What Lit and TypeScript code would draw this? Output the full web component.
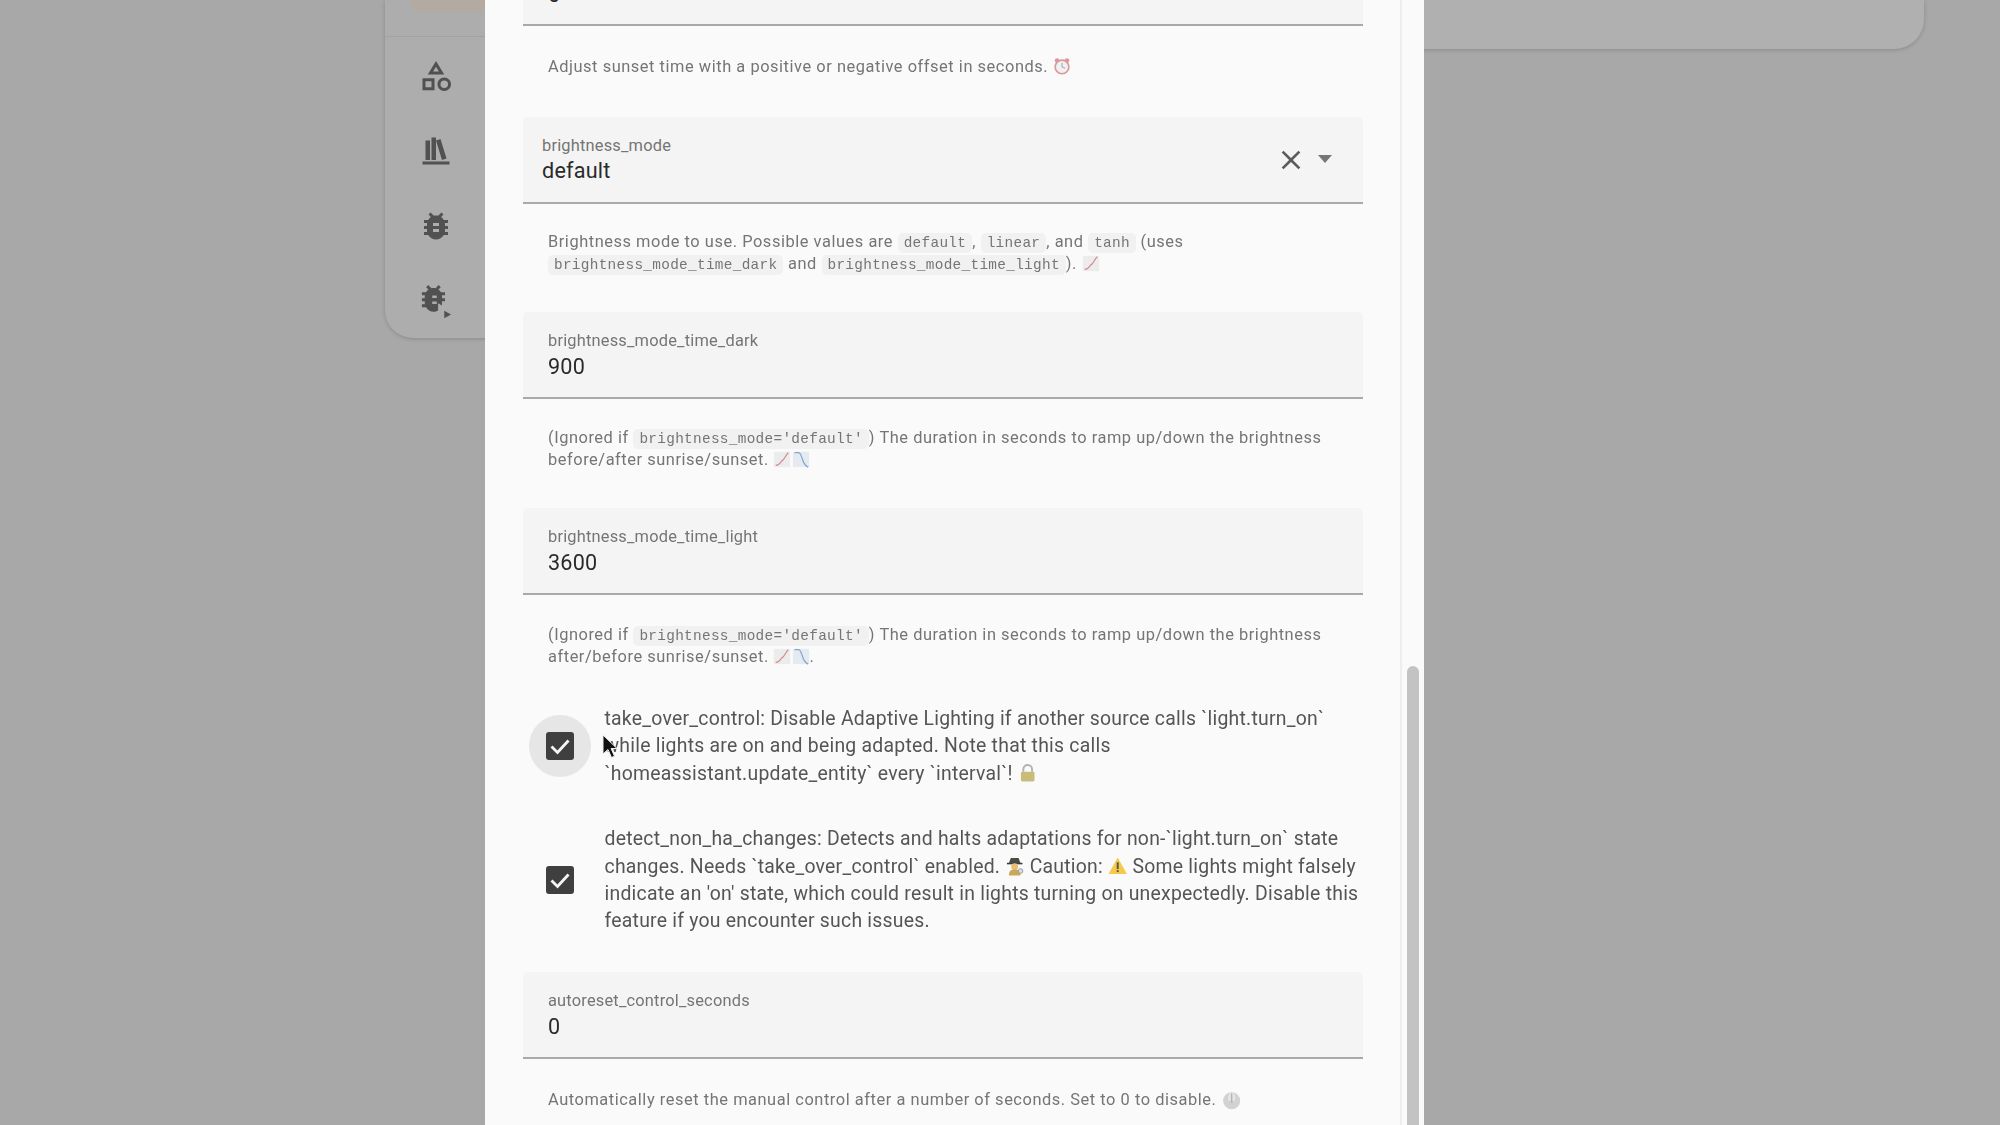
import { LitElement, html, css, svg } from "lit";
import { customElement } from "lit/decorators.js";

const P = {
  shape:
    "M11,13.5V21.5H3V13.5H11M9,15.5H5V19.5H9V15.5M12,2L17.5,11H6.5L12,2M12,5.86L10.08,9H13.92L12,5.86M17.5,13C20,13 22,15 22,17.5C22,20 20,22 17.5,22C15,22 13,20 13,17.5C13,15 15,13 17.5,13M17.5,15A2.5,2.5 0 0,0 15,17.5A2.5,2.5 0 0,0 17.5,20A2.5,2.5 0 0,0 20,17.5A2.5,2.5 0 0,0 17.5,15Z",
  shelf: "M9 3V18H12V3H9M12 5L16 18L19 17L15 4L12 5M5 5V18H8V5H5M3 19V21H21V19H3Z",
  bug: "M14,12H10V10H14M14,16H10V14H14M20,8H17.19C16.74,7.22 16.12,6.55 15.37,6.04L17,4.41L15.59,3L13.42,5.17C12.96,5.06 12.5,5 12,5C11.5,5 11.04,5.06 10.59,5.17L8.41,3L7,4.41L8.62,6.04C7.88,6.55 7.26,7.22 6.81,8H4V10H6.09C6.04,10.33 6,10.66 6,11V12H4V14H6V15C6,15.34 6.04,15.67 6.09,16H4V18H6.81C7.85,19.79 9.78,21 12,21C14.22,21 16.15,19.79 17.19,18H20V16H17.91C17.96,15.67 18,15.34 18,15V14H20V12H18V11C18,10.66 17.96,10.33 17.91,10H20V8Z",
  bugPlay:
    "M12.5,10H9.5V8.4H12.5M12.5,14H9.5V12.4H12.5M18,6.2H15.3C14.9,5.5 14.3,4.9 13.6,4.4L15.2,2.8L13.8,1.4L11.7,3.5C11.2,3.4 10.8,3.3 10.3,3.3C9.8,3.3 9.4,3.4 8.9,3.5L6.8,1.4L5.4,2.8L7,4.4C6.3,4.9 5.7,5.5 5.3,6.2H2.6V8.2H4.6C4.5,8.5 4.5,8.9 4.5,9.2V10.2H2.6V12.2H4.5V13.2C4.5,13.6 4.5,13.9 4.6,14.2H2.6V16.2H5.3C6.3,18 8.2,19.2 10.3,19.2C11.4,19.2 12.5,18.9 13.4,18.3V13.5L16,15V14.2H16V12.2H18V10.2H16V9.2C16,8.9 16,8.5 15.9,8.2H18V6.2ZM17.5,18.5V23.5L22,21Z",
  close: "M19,6.41L17.59,5L12,10.59L6.41,5L5,6.41L10.59,12L5,17.59L6.41,19L12,13.41L17.59,19L19,17.59L13.41,12L19,6.41Z",
};

const icon = (d: string) => html`<svg class="nav-icon" viewBox="0 0 24 24"><path d=${d}></path></svg>`;

const emoji = {
  clock: svg`<circle cx="4.5" cy="4" r="2.6" fill="#dc9a9a"/><circle cx="15.5" cy="4" r="2.6" fill="#dc9a9a"/><circle cx="10" cy="11" r="7.6" fill="#eef0f2" stroke="#dc9696" stroke-width="1.8"/><path d="M10 11V6.5M10 11l3.5 1.5" stroke="#999" stroke-width="1" fill="none"/>`,
  up: svg`<rect x="1" y="2" width="18" height="17" fill="#ececec"/><path d="M3 17c3 0 4-1 6-4 1-2 2-1 3-3 2-3 3-5 5-7" stroke="#cf8a8f" stroke-width="1.3" fill="none"/>`,
  down: svg`<rect x="1" y="2" width="18" height="17" fill="#e5eaf1"/><path d="M3 3h4c2 0 2 1 3 3s2 6 3 8 3 4 5 5" stroke="#7fa5cf" stroke-width="1.3" fill="none"/>`,
  lock: svg`<path d="M5.5 9V6.5a4.5 4.5 0 0 1 9 0V9" fill="none" stroke="#b2b2b2" stroke-width="2"/><rect x="3" y="9" width="14" height="10" rx="1.4" fill="#c9bb78"/>`,
  spy: svg`<path d="M4 7.5 6 2h8l2 5.5z" fill="#4a4a4a"/><rect x="2" y="7" width="16" height="1.6" fill="#3c3c3c"/><circle cx="10" cy="11" r="3.6" fill="#e6bf73"/><path d="M4 20c0-5 3-6 6-6s6 1 6 6z" fill="#c9a85c"/><circle cx="16" cy="15.5" r="2.4" fill="#ddd" stroke="#999"/>`,
  warn: svg`<path d="M10 1.5 19.5 18.5H.5z" fill="#f7c94a"/><rect x="9" y="6.5" width="2" height="7" fill="#555"/><rect x="9" y="14.6" width="2" height="2" fill="#555"/>`,
  stop: svg`<circle cx="10" cy="11" r="8" fill="#d2d2d2"/><path d="M10 2c3 2 4 5 3 9h-6c-1-4 0-7 3-9z" fill="#e6e6e6"/><rect x="9.3" y="4" width="1.4" height="9" fill="#b4b4b4"/>`,
};

const em = (g: unknown, cls = "") => html`<svg class="emoji ${cls}" viewBox="0 0 20 20">${g}</svg>`;

@customElement("app-root")
export class AppRoot extends LitElement {
  static styles = css`
    :host {
      display: block;
      position: relative;
      width: 2000px;
      height: 1125px;
      overflow: hidden;
      background: #a8a8a8;
      font-family: Roboto, "Liberation Sans", sans-serif;
    }
    /* page behind the dialog */
    .page {
      display: flex;
      align-items: flex-start;
      padding-left: 385px;
      width: 1539px;
      filter: blur(0.4px);
    }
    .sidebar {
      width: 130px;
      height: 338px;
      flex: none;
      background: #adadad;
      border-bottom-left-radius: 28px;
      box-shadow: 0 1px 4px rgba(0, 0, 0, 0.18);
    }
    .nav-top {
      height: 37px;
      box-sizing: border-box;
      padding: 0 0 25px 26px;
      border-bottom: 1px solid #a2a2a2;
    }
    .nav-active {
      height: 12px;
      background: #b3aba1;
      border-bottom-left-radius: 6px;
    }
    .nav-item {
      height: 75px;
      width: 102px;
      display: flex;
      align-items: center;
      justify-content: center;
    }
    .nav-list {
      padding-top: 1px;
    }
    .nav-icon {
      width: 36px;
      height: 36px;
      fill: #515151;
    }
    .panel {
      flex: 1;
      height: 49px;
      background: #b0b0b0;
      border-bottom-right-radius: 30px;
      box-shadow: 0 1px 4px rgba(0, 0, 0, 0.18);
    }
    /* dialog */
    .dialog {
      position: absolute;
      left: 485px;
      top: 0;
      width: 939px;
      height: 1125px;
      background: #fafafa;
      overflow: hidden;
      box-sizing: border-box;
      padding-left: 38px;
    }
    .track {
      position: absolute;
      left: 915px;
      top: 0;
      bottom: 0;
      width: 2px;
      background: #eeeeee;
    }
    .thumb {
      position: absolute;
      left: 922px;
      top: 666px;
      bottom: 0;
      width: 12px;
      background: #c3c3c3;
      border-radius: 6px 6px 0 0;
    }
    .content {
      width: 840px;
      display: flex;
      flex-direction: column;
      filter: blur(0.4px);
    }
    .field {
      height: 87px;
      box-sizing: border-box;
      padding: 20px 25px 0;
      background: #f4f4f4;
      border-radius: 5px 5px 0 0;
      border-bottom: 2px solid #a9a9a9;
      display: flex;
      align-items: flex-start;
    }
    .field.clipped {
      height: 26px;
      padding: 0 25px;
      border-radius: 0;
      overflow: hidden;
    }
    .field.select {
      padding-left: 19px;
    }
    .field-body {
      flex: 1;
      min-width: 0;
    }
    .label {
      font-size: 16.4px;
      line-height: 18px;
      color: #757575;
      letter-spacing: 0.2px;
    }
    .value {
      font-size: 21.6px;
      line-height: 30px;
      margin-top: 2px;
      color: #2a2a2a;
      letter-spacing: 0.2px;
    }
    .field.select .value {
      margin-top: 1px;
    }
    .field.clipped .clip-value {
      margin-top: -20px;
    }
    .actions {
      display: flex;
      align-items: center;
      height: 44px;
      gap: 8px;
      margin-right: 6px;
    }
    .close {
      width: 32px;
      height: 32px;
      fill: #5c5c5c;
      margin-top: 2px;
    }
    .arrow {
      width: 0;
      height: 0;
      border-left: 7.5px solid transparent;
      border-right: 7.5px solid transparent;
      border-top: 8px solid #757575;
      margin-left: 3px;
    }
    .help {
      padding-left: 25px;
      font-size: 16.4px;
      line-height: 22px;
      letter-spacing: 0.55px;
      color: #757575;
    }
    .help code {
      font-family: "Liberation Mono", monospace;
      font-size: 14.4px;
      line-height: 1;
      background: #f1f1f1;
      border-radius: 5px;
      padding: 2px 6px;
      letter-spacing: 0.3px;
    }
    .emoji {
      width: 1.1em;
      height: 1.1em;
      vertical-align: -0.2em;
    }
    .emoji.large {
      width: 1.3em;
      height: 1.3em;
      vertical-align: -0.3em;
    }
    .check-row {
      display: flex;
      align-items: center;
      font-size: 19.4px;
      line-height: 27.4px;
      letter-spacing: 0.24px;
      color: #555555;
    }
    .check-text {
      white-space: nowrap;
    }
    .check-text .emoji {
      width: 1em;
      height: 1em;
      vertical-align: -0.15em;
    }
    .check-cell {
      width: 89px;
      flex: none;
      display: flex;
      justify-content: center;
      margin-left: -7.5px;
    }
    .check-wrap {
      width: 62px;
      height: 62px;
      border-radius: 50%;
      display: flex;
      align-items: center;
      justify-content: center;
    }
    .check-wrap.focus {
      background: #e6e6e6;
    }
    .box {
      width: 28px;
      height: 28px;
      fill: #3f3f3f;
    }
    .cursor {
      position: absolute;
      left: 602px;
      top: 734px;
      width: 16px;
      height: 26px;
    }
    .mt-help0 { margin-top: 30px; }
    .mt-field1 { margin-top: 39px; }
    .mt-help1 { margin-top: 27px; }
    .mt-field2 { margin-top: 37px; }
    .mt-help2 { margin-top: 28px; }
    .mt-field3 { margin-top: 37px; }
    .mt-help3 { margin-top: 29px; }
    .mt-check1 { margin-top: 37px; }
    .mt-check2 { margin-top: 38px; }
    .mt-field4 { margin-top: 37px; }
    .mt-help4 { margin-top: 30px; }
  `;

  field(label: string, value: string, cls = "") {
    return html`<div class="field ${cls}">
      <div class="field-body">
        <div class="label">${label}</div>
        <div class="value">${value}</div>
      </div>
    </div>`;
  }

  check(focus: boolean) {
    return html`<div class="check-cell">
      <div class="check-wrap ${focus ? "focus" : ""}">
        <svg class="box" viewBox="0 0 28 28">
          <rect width="28" height="28" rx="3"></rect>
          <path d="M5.5 14.5l6 6 11-12" fill="none" stroke="#f5f5f5" stroke-width="2.8"></path>
        </svg>
      </div>
    </div>`;
  }

  render() {
    return html`
      <div class="page">
        <aside class="sidebar">
          <div class="nav-top"><div class="nav-active"></div></div>
          <div class="nav-list">
            <div class="nav-item">${icon(P.shape)}</div>
            <div class="nav-item">${icon(P.shelf)}</div>
            <div class="nav-item">${icon(P.bug)}</div>
            <div class="nav-item">${icon(P.bugPlay)}</div>
          </div>
        </aside>
        <div class="panel"></div>
      </div>
      <section class="dialog">
        <div class="content">
          <div class="field clipped"><div class="value clip-value">0</div></div>
          <div class="help mt-help0">
            Adjust sunset time with a positive or negative offset in seconds. ${em(emoji.clock)}
          </div>

          <div class="field select mt-field1">
            <div class="field-body">
              <div class="label">brightness_mode</div>
              <div class="value">default</div>
            </div>
            <div class="actions">
              <svg class="close" viewBox="0 0 24 24"><path d=${P.close}></path></svg>
              <span class="arrow"></span>
            </div>
          </div>
          <div class="help mt-help1">
            Brightness mode to use. Possible values are <code>default</code>, <code>linear</code>, and
            <code>tanh</code> (uses<br /><code>brightness_mode_time_dark</code> and
            <code>brightness_mode_time_light</code>). ${em(emoji.up)}
          </div>

          ${this.field("brightness_mode_time_dark", "900", "mt-field2")}
          <div class="help mt-help2">
            (Ignored if <code>brightness_mode='default'</code>) The duration in seconds to ramp up/down the brightness<br />
            before/after sunrise/sunset. ${em(emoji.up)}${em(emoji.down)}
          </div>

          ${this.field("brightness_mode_time_light", "3600", "mt-field3")}
          <div class="help mt-help3">
            (Ignored if <code>brightness_mode='default'</code>) The duration in seconds to ramp up/down the brightness<br />
            after/before sunrise/sunset. ${em(emoji.up)}${em(emoji.down)}.
          </div>

          <div class="check-row mt-check1">
            ${this.check(true)}
            <div class="check-text">
              take_over_control: Disable Adaptive Lighting if another source calls \`light.turn_on\`<br />
              while lights are on and being adapted. Note that this calls<br />
              \`homeassistant.update_entity\` every \`interval\`! ${em(emoji.lock)}
            </div>
          </div>
          <div class="check-row mt-check2">
            ${this.check(false)}
            <div class="check-text">
              detect_non_ha_changes: Detects and halts adaptations for non-\`light.turn_on\` state<br />
              changes. Needs \`take_over_control\` enabled. ${em(emoji.spy)} Caution: ${em(emoji.warn)} Some lights might falsely<br />
              indicate an 'on' state, which could result in lights turning on unexpectedly. Disable this<br />
              feature if you encounter such issues.
            </div>
          </div>

          ${this.field("autoreset_control_seconds", "0", "mt-field4")}
          <div class="help mt-help4">
            Automatically reset the manual control after a number of seconds. Set to 0 to disable. ${em(emoji.stop, "large")}
          </div>
        </div>
        <div class="track"></div>
        <div class="thumb"></div>
      </section>
      <svg class="cursor" viewBox="0 0 16 26">
        <path d="M1 1v19l5-4.5 3.5 8 3-1.3-3.4-7.7H15z" fill="#111" stroke="#eee" stroke-width="1"></path>
      </svg>
    `;
  }
}
